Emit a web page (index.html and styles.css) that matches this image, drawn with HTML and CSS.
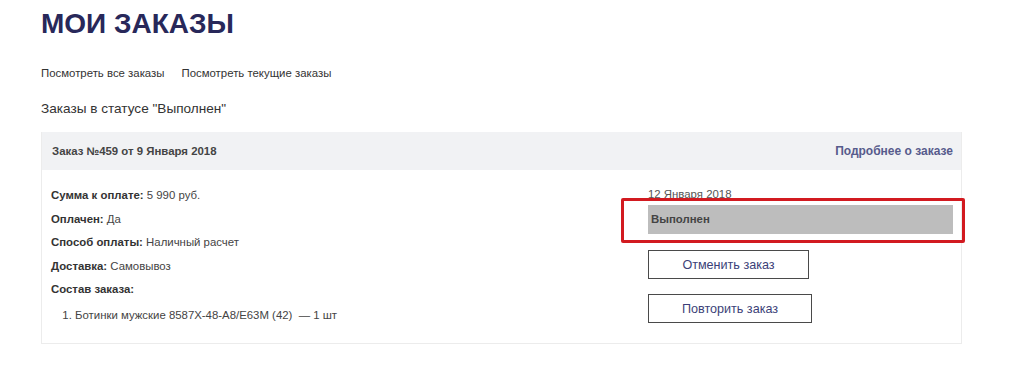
FILE: index.html
```html
<!DOCTYPE html>
<html lang="ru">
<head>
  <meta charset="UTF-8" />
  <title>Мои заказы</title>
  <link rel="stylesheet" href="styles.css">
</head>
<body>
  <div class="page">
    <h1 class="title">МОИ ЗАКАЗЫ</h1>

    <div class="tabs">
      <a href="#">Посмотреть все заказы</a>
      <a href="#">Посмотреть текущие заказы</a>
    </div>

    <div class="status-title">Заказы в статусе "Выполнен"</div>

    <div class="order">
      <div class="order-head">
        <span class="order-num">Заказ №459 от 9 Января 2018</span>
        <a href="#" class="order-more">Подробнее о заказе</a>
      </div>
      <div class="order-body">
        <div class="order-info">
          <div class="row"><b>Сумма к оплате:</b> 5 990 руб.</div>
          <div class="row"><b>Оплачен:</b> Да</div>
          <div class="row"><b>Способ оплаты:</b> Наличный расчет</div>
          <div class="row"><b>Доставка:</b> Самовывоз</div>
          <div class="row"><b>Состав заказа:</b></div>
          <ol class="items">
            <li>Ботинки мужские 8587X-48-A8/E63M (42) &nbsp;— 1 шт</li>
          </ol>
        </div>
        <div class="order-side">
          <div class="date">12 Января 2018</div>
          <div class="status-wrap">
            <div class="status">Выполнен</div>
          </div>
          <button class="btn btn-cancel">Отменить заказ</button>
          <button class="btn btn-repeat">Повторить заказ</button>
        </div>
      </div>
    </div>
  </div>
</body>
</html>
```

FILE: styles.css
```css
body, html {
  margin: 0;
  padding: 0;
  background: #fff;
  font-family: 'Liberation Sans', Arial, sans-serif;
  color: #333;
}

.page {
  padding: 0 62px 0 41px;
}

.title {
  margin: 0;
  padding-top: 8px;
  font-size: 28px;
  line-height: 32px;
  font-weight: bold;
  color: #28285a;
}

.tabs {
  margin-top: 25px;
  display: flex;
  gap: 17px;
  font-size: 11.4px;
  line-height: 16px;
}

.tabs a {
  color: #333;
  text-decoration: none;
}

.status-title {
  margin-top: 19px;
  font-size: 13.6px;
  line-height: 18px;
  color: #333;
}

.order {
  margin-top: 14px;
  border: 1px solid #ececec;
  border-top: none;
}

.order-head {
  height: 38px;
  background: #f1f2f4;
  display: flex;
  align-items: center;
  justify-content: space-between;
  padding: 0 8px 0 10px;
  font-size: 11.4px;
  font-weight: bold;
}

.order-num {
  color: #444;
}

.order-more {
  font-size: 12px;
  color: #575b8c;
  text-decoration: none;
}

.order-body {
  display: flex;
  padding: 14px 8px 16px 9px;
  font-size: 11.4px;
}

.order-info {
  width: 597px;
}

.row {
  line-height: 23.5px;
  color: #444;
}

.row b {
  color: #333;
}

.items {
  margin: 2px 0 0;
  padding-left: 24px;
  line-height: 23.5px;
  color: #444;
}

.order-side {
  flex: 1;
  display: flex;
  flex-direction: column;
  align-items: flex-start;
}

.date {
  line-height: 20px;
  color: #555;
}

.status-wrap {
  position: relative;
  align-self: stretch;
  margin-top: 1px;
}

.status {
  height: 29px;
  line-height: 29px;
  background: #bdbdbd;
  font-weight: bold;
  color: #444;
  padding-left: 3px;
}

.status-wrap::after {
  content: '';
  position: absolute;
  left: -27px;
  right: -12px;
  top: -7px;
  bottom: -9px;
  border: 3px solid #d21a20;
  border-radius: 2px;
}

.btn {
  height: 29px;
  background: #fff;
  border: 1px solid #4a4a4a;
  font-family: 'Liberation Sans', Arial, sans-serif;
  font-size: 12.6px;
  color: #3c3f78;
  cursor: pointer;
}

.btn-cancel {
  margin-top: 16px;
  width: 161px;
}

.btn-repeat {
  margin-top: 15px;
  width: 164px;
}
```
